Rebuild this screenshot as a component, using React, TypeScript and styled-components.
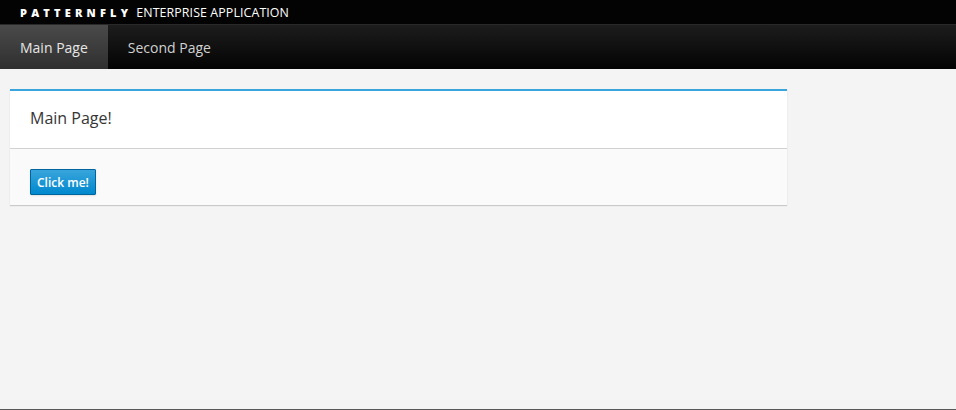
import React from 'react';
import styled, { createGlobalStyle } from 'styled-components';

const GlobalStyle = createGlobalStyle`
  html, body {
    margin: 0;
    padding: 0;
    height: 100%;
  }
  body {
    background: #f4f4f4;
    font-family: "Open Sans", "Liberation Sans", sans-serif;
    color: #363636;
  }
  #root {
    min-height: 100vh;
    border-bottom: 1px solid #595959;
    box-sizing: border-box;
  }
`;

const TopBar = styled.div`
  height: 25px;
  background: #030303;
  display: flex;
  align-items: center;
  padding-left: 20px;
  border-bottom: 1px solid #292929;
  box-sizing: border-box;
`;

const Logo = styled.span`
  color: #fff;
  font-weight: 800;
  font-size: 11px;
  letter-spacing: 4.2px;
  margin-right: 4px;
`;

const AppName = styled.span`
  color: #fff;
  font-size: 12.4px;
  letter-spacing: 0.1px;
`;

const NavBar = styled.nav`
  height: 44px;
  display: flex;
  background: linear-gradient(to bottom, #1d1d1d 0%, #030303 100%);
`;

const NavItem = styled.a<{ $active?: boolean }>`
  display: flex;
  align-items: center;
  padding: 0 20px;
  font-size: 14px;
  color: ${(p) => (p.$active ? '#e6e6e6' : '#d1d1d1')};
  background: ${(p) =>
    p.$active ? 'linear-gradient(to bottom, #4a4a4a 0%, #2f2f2f 100%)' : 'transparent'};
  text-decoration: none;
  cursor: pointer;
`;

const Content = styled.main`
  padding: 20px 10px;
`;

const Card = styled.section`
  width: 777px;
  background: #fff;
  border-top: 2px solid #39a5dc;
  box-shadow: 0 1px 1px rgba(3, 3, 3, 0.175);
`;

const CardHeader = styled.div`
  height: 58px;
  padding: 0 20px 4px;
  box-sizing: border-box;
  display: flex;
  align-items: center;
  font-size: 16px;
  font-weight: 400;
  border-bottom: 1px solid #d1d1d1;
`;

const CardFooter = styled.div`
  background: #fafafa;
  padding: 20px 20px 10px;
  height: 56px;
  box-sizing: border-box;
`;

const Button = styled.button`
  height: 26px;
  padding: 0 6px;
  font-family: inherit;
  font-size: 12px;
  font-weight: 600;
  color: #fff;
  background: linear-gradient(to bottom, #39a5dc 0%, #0088ce 100%);
  border: 1px solid #00659c;
  border-radius: 1px;
  cursor: pointer;
  box-shadow: 0 1px 2px rgba(3, 3, 3, 0.1);
`;

export default function App() {
  return (
    <>
      <GlobalStyle />
      <TopBar>
        <Logo>PATTERNFLY</Logo>
        <AppName>ENTERPRISE APPLICATION</AppName>
      </TopBar>
      <NavBar>
        <NavItem $active>Main Page</NavItem>
        <NavItem>Second Page</NavItem>
      </NavBar>
      <Content>
        <Card>
          <CardHeader>Main Page!</CardHeader>
          <CardFooter>
            <Button>Click me!</Button>
          </CardFooter>
        </Card>
      </Content>
    </>
  );
}
